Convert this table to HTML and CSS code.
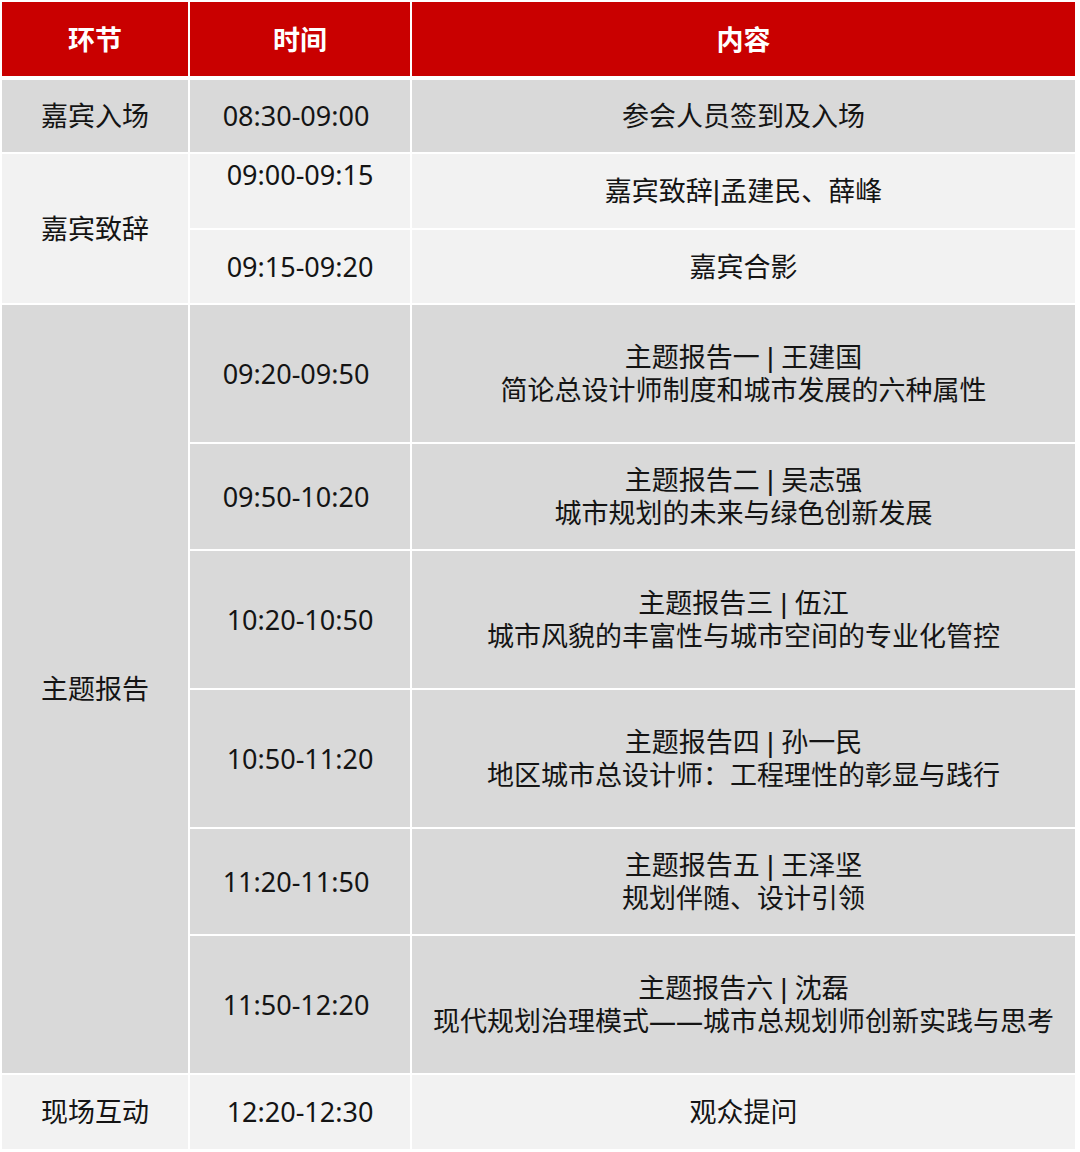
FILE: index.html
```html
<!DOCTYPE html>
<html lang="zh-CN">
<head>
<meta charset="utf-8">
<title>议程</title>
<link rel="stylesheet" href="styles.css">
</head>
<body>
<div class="agenda">
  <div class="cell head">环节</div>
  <div class="cell head">时间</div>
  <div class="cell head">内容</div>

  <div class="cell dark">嘉宾入场</div>
  <div class="cell dark shift">08:30-09:00</div>
  <div class="cell dark">参会人员签到及入场</div>

  <div class="cell light span2">嘉宾致辞</div>
  <div class="cell light top">09:00-09:15</div>
  <div class="cell light">嘉宾致辞<span class="bar">|</span>孟建民、薛峰</div>
  <div class="cell light">09:15-09:20</div>
  <div class="cell light">嘉宾合影</div>

  <div class="cell dark span6">主题报告</div>
  <div class="cell dark shift">09:20-09:50</div>
  <div class="cell dark"><p>主题报告一 <span class="bar">|</span> 王建国<br>简论总设计师制度和城市发展的六种属性</p></div>
  <div class="cell dark shift">09:50-10:20</div>
  <div class="cell dark"><p>主题报告二 <span class="bar">|</span> 吴志强<br>城市规划的未来与绿色创新发展</p></div>
  <div class="cell dark">10:20-10:50</div>
  <div class="cell dark"><p>主题报告三 <span class="bar">|</span> 伍江<br>城市风貌的丰富性与城市空间的专业化管控</p></div>
  <div class="cell dark">10:50-11:20</div>
  <div class="cell dark"><p>主题报告四 <span class="bar">|</span> 孙一民<br>地区城市总设计师：工程理性的彰显与践行</p></div>
  <div class="cell dark shift">11:20-11:50</div>
  <div class="cell dark"><p>主题报告五 <span class="bar">|</span> 王泽坚<br>规划伴随、设计引领</p></div>
  <div class="cell dark shift">11:50-12:20</div>
  <div class="cell dark"><p>主题报告六 <span class="bar">|</span> 沈磊<br>现代规划治理模式——城市总规划师创新实践与思考</p></div>

  <div class="cell light">现场互动</div>
  <div class="cell light">12:20-12:30</div>
  <div class="cell light">观众提问</div>
</div>
</body>
</html>
```

FILE: styles.css
```css
html, body {
  margin: 0;
  padding: 0;
  background: #ffffff;
}

body {
  width: 1080px;
  height: 1152px;
  font-family: "Noto Sans", "Noto Sans CJK SC", sans-serif;
  color: #141414;
}

.agenda {
  display: grid;
  grid-template-columns: 186px 220px 663px;
  grid-template-rows: 76px 72px 74px 73px 137px 105px 137px 137px 105px 137px 74px;
  gap: 2px;
  padding: 2px 5px 3px 2px;
  background: #ffffff;
}

.cell {
  display: flex;
  align-items: center;
  justify-content: center;
  text-align: center;
  font-size: 27px;
  line-height: 32px;
  white-space: nowrap;
}

.cell p {
  margin: 0;
}

.bar {
  font-family: "Liberation Sans", sans-serif;
  font-size: 28px;
}

.head {
  background: #c90000;
  color: #ffffff;
  font-weight: 700;
  margin-bottom: 2px;
  padding-top: 2px;
}

.dark {
  background: #d9d9d9;
}

.light {
  background: #f2f2f2;
}

.span2 {
  grid-row: span 2;
}

.span6 {
  grid-row: span 6;
}

.top {
  align-items: flex-start;
  padding-top: 5px;
}

.shift {
  padding-right: 8px;
}
```
